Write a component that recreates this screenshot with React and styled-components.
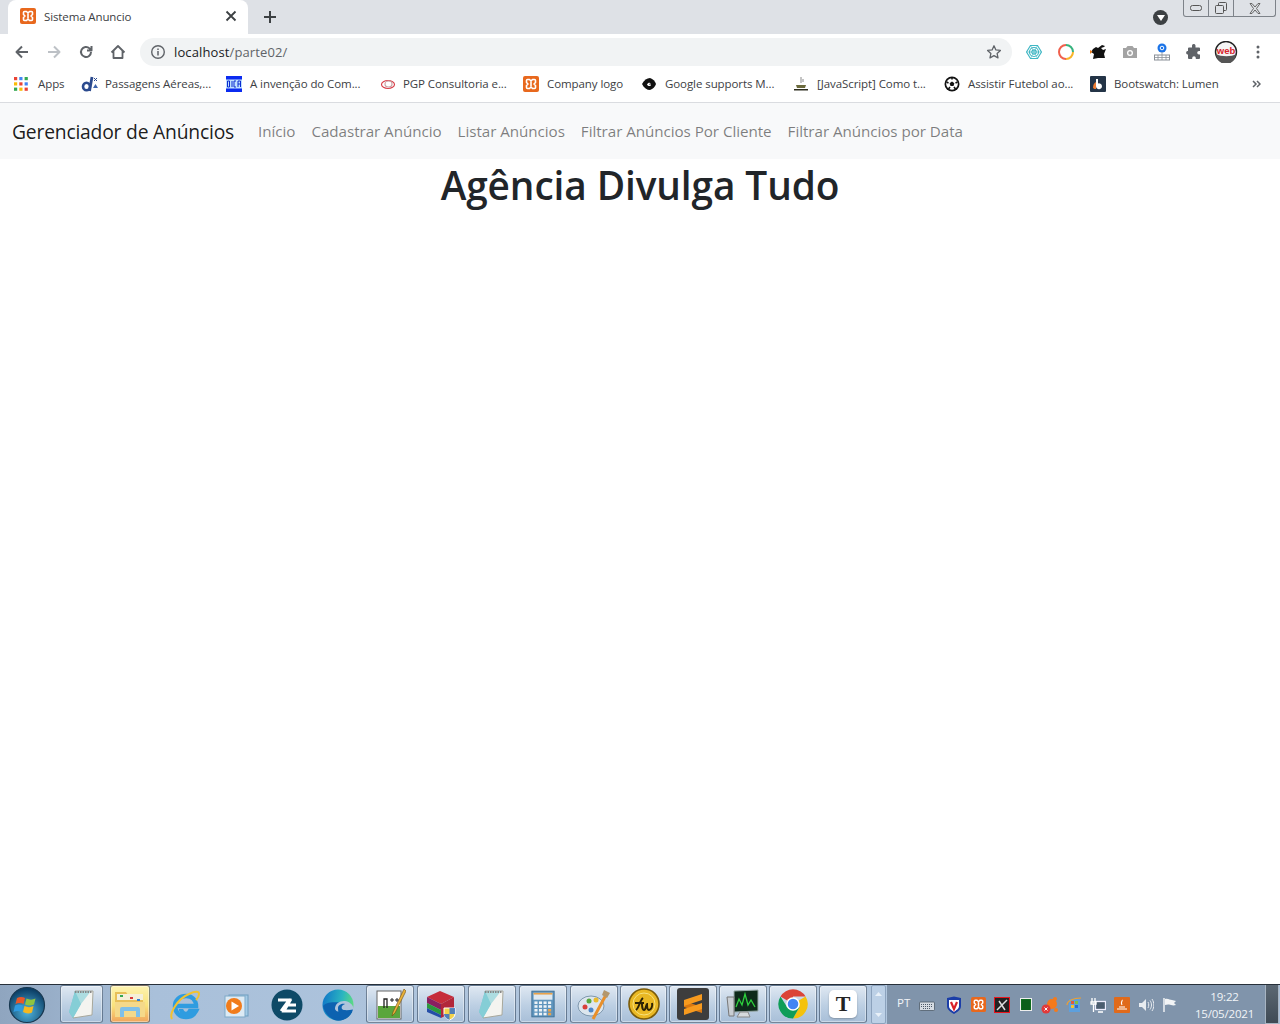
import React from 'react'
import styled, { createGlobalStyle } from 'styled-components'

const UI_FONT = `'Open Sans', 'Noto Sans', sans-serif`

const GlobalStyle = createGlobalStyle`
  * {
    box-sizing: border-box;
  }

  html,
  body {
    margin: 0;
    padding: 0;
    height: 100%;
    background: #ffffff;
    font-family: ${UI_FONT};
    color: #212529;
    overflow: hidden;
  }

  #root {
    height: 100%;
  }
`

const Screen = styled.div`
  width: 1280px;
  height: 1024px;
  display: flex;
  flex-direction: column;
`

/* browser chrome */
const TabStrip = styled.div`
  height: 34px;
  background: #dee1e6;
  display: flex;
  padding-left: 8px;
`

const Tab = styled.div`
  width: 240px;
  height: 34px;
  padding: 0 9px 2px 12px;
  background: #ffffff;
  border-radius: 8px 8px 0 0;
  display: flex;
  align-items: center;
  gap: 8px;
`

const TabTitle = styled.span`
  flex: 1;
  font-size: 11.5px;
  letter-spacing: -0.12px;
  color: #3c4043;
`

const NewTab = styled.div`
  width: 44px;
  height: 34px;
  display: flex;
  align-items: center;
  justify-content: center;
`

const StripRight = styled.div`
  margin-left: auto;
  display: flex;
  align-items: flex-start;
`

const ProfileDot = styled.div`
  width: 15px;
  height: 15px;
  margin: 10px 15px 0 0;
  border-radius: 50%;
  background: #3c4043;
  display: flex;
  align-items: center;
  justify-content: center;
`

const WindowControls = styled.div`
  width: 93px;
  height: 17px;
  margin-right: 4px;
  display: flex;
  border: 1px solid #7d8289;
  border-top: 0;
  border-radius: 0 0 3px 3px;
`

const WindowButton = styled.div`
  flex: ${(p) => p.$grow || 1};
  display: flex;
  align-items: center;
  justify-content: center;
  & + & {
    border-left: 1px solid #7d8289;
  }
`

const Toolbar = styled.div`
  height: 34px;
  padding: 2px 0 0 6px;
  background: #ffffff;
  display: flex;
  align-items: center;
`

const NavIcon = styled.div`
  width: 32px;
  height: 32px;
  display: flex;
  align-items: center;
  justify-content: center;
`

const Omnibox = styled.div`
  width: 872px;
  height: 28px;
  margin-left: 6px;
  padding: 0 10px;
  background: #f1f3f4;
  border-radius: 14px;
  display: flex;
  align-items: center;
  font-size: 13px;
  letter-spacing: 0.12px;
`

const Host = styled.span`
  margin-left: 8px;
  color: #202124;
`

const Path = styled.span`
  flex: 1;
  color: #5f6368;
`

const Extensions = styled.div`
  display: flex;
  align-items: center;
  margin-left: 6px;
`

const ExtIcon = styled.div`
  width: 32px;
  height: 32px;
  display: flex;
  align-items: center;
  justify-content: center;
`

const Bookmarks = styled.div`
  height: 35px;
  padding: 0 0 3px 14px;
  background: #ffffff;
  border-bottom: 1px solid #dadce0;
  display: flex;
  align-items: center;
`

const Bookmark = styled.div`
  flex: 0 0 ${(p) => p.$width}px;
  display: flex;
  align-items: center;
  gap: ${(p) => p.$gap || 8}px;
  font-size: 11.5px;
  letter-spacing: -0.08px;
  color: #3c4043;
  white-space: nowrap;
`

const More = styled.div`
  margin-left: auto;
  margin-right: 19px;
  display: flex;
`

/* the page itself */
const Page = styled.main`
  flex: 1;
  background: #ffffff;
`

const Navbar = styled.nav`
  height: 56px;
  padding: 0 12px;
  background: #f8f9fa;
  display: flex;
  align-items: center;
`

const Brand = styled.a`
  padding-top: 1px;
  margin-right: 24px;
  font-size: 19.3px;
  letter-spacing: -0.2px;
  color: rgba(0, 0, 0, 0.9);
`

const NavLinks = styled.div`
  padding-bottom: 1px;
  display: flex;
  gap: 16px;
`

const NavLink = styled.a`
  font-size: 15.2px;
  letter-spacing: -0.05px;
  color: rgba(0, 0, 0, 0.5);
`

const Title = styled.h1`
  margin: 0;
  font-size: 38.8px;
  font-weight: 600;
  line-height: 52px;
  letter-spacing: -0.1px;
  text-align: center;
  color: #212529;
`

/* windows taskbar */
const Taskbar = styled.footer`
  height: 40px;
  border-top: 1px solid #27303a;
  background: linear-gradient(90deg, #8fa5bf 0%, #a9c0da 12%, #b3c8df 60%, #a9bfd8 100%);
  display: flex;
  align-items: stretch;
`

const Start = styled.div`
  width: 54px;
  display: flex;
  align-items: center;
  justify-content: center;
`

const TaskGroup = styled.div`
  display: flex;
  gap: ${(p) => p.$gap || 0}px;
  margin-left: ${(p) => p.$left || 0}px;
`

const TaskButton = styled.div`
  width: ${(p) => p.$width || 48}px;
  height: 38px;
  display: flex;
  align-items: center;
  justify-content: center;
  border: 1px solid rgba(60, 80, 105, 0.65);
  border-radius: 3px;
  box-shadow: inset 0 0 0 1px rgba(255, 255, 255, 0.4);
  background: ${(p) =>
    p.$active
      ? 'linear-gradient(180deg, #fdf3b0 0%, #f9e27c 55%, #f0a55c 100%)'
      : 'linear-gradient(180deg, #dfe8f2 0%, #bccfe3 55%, #a8bfd8 100%)'};
`

const PinnedIcon = styled.div`
  width: 51px;
  display: flex;
  align-items: center;
  justify-content: center;
`

const ScrollStub = styled.div`
  width: 15px;
  margin-left: 4px;
  padding: 6px 0;
  display: flex;
  flex-direction: column;
  align-items: center;
  justify-content: space-between;
  background: #bcd0e6;
  border: 1px solid #8ba2bd;
  border-radius: 2px;
`

const Tray = styled.div`
  margin-left: 1px;
  padding-left: 10px;
  flex: 1;
  background: #8094ab;
  display: flex;
  align-items: center;
  color: #f2f5f8;
`

const Lang = styled.span`
  width: 20px;
  margin-top: -5px;
  font-size: 11.5px;
`

const TrayIcons = styled.div`
  margin-left: 7px;
  display: flex;
  align-items: center;
  gap: 4px;
`

const TraySlot = styled.div`
  width: 20px;
  height: 20px;
  display: flex;
  align-items: center;
  justify-content: center;
`

const Clock = styled.div`
  width: 71px;
  margin-left: auto;
  margin-right: 5px;
  text-align: center;
  font-size: 11.5px;
  line-height: 17px;
  letter-spacing: -0.2px;
`

const ShowDesktop = styled.div`
  width: 14px;
  margin-right: 1px;
  background: linear-gradient(180deg, #5b6773 0%, #3f4a55 100%);
  border: 1px solid #a7b4c2;
  border-top: 0;
`

const TTile = styled.div`
  width: 28px;
  height: 28px;
  background: #ffffff;
  border-radius: 5px;
  box-shadow: 0 1px 2px rgba(0, 0, 0, 0.25);
  display: flex;
  align-items: center;
  justify-content: center;
  font-family: 'Liberation Serif', serif;
  font-weight: 700;
  font-size: 22px;
  color: #222222;
`

/* icons */
const Xampp = ({ size = 16 }) => (
  <svg width={size} height={size} viewBox="0 0 16 16">
    <rect width="16" height="16" rx="2" fill="#e8681d" />
    <path
      d="M4.500 3.500h2L8 5l1.500-1.500h2a1 1 0 0 1 1 1v2L11 8l1.500 1.500v2a1 1 0 0 1-1 1h-2L8 11l-1.500 1.500h-2a1 1 0 0 1-1-1v-2L5 8 3.500 6.500v-2a1 1 0 0 1 1-1z"
      fill="none"
      stroke="#fff"
      strokeWidth="1.600"
      strokeLinejoin="round"
    />
    <path d="M8 5.500v5" stroke="#fff" strokeWidth="1.600" />
  </svg>
)

const Line = ({ d, color = '#5f6368', w = 2, size = 16 }) => (
  <svg width={size} height={size} viewBox="0 0 16 16" fill="none">
    <path d={d} stroke={color} strokeWidth={w} strokeLinejoin="round" />
  </svg>
)

const AppsGrid = () => {
  const colors = ['#ea4335', '#4285f4', '#34a853', '#fbbc05', '#ea4335', '#4285f4', '#34a853', '#fbbc05', '#ea4335']
  return (
    <svg width="14" height="14" viewBox="0 0 14 14">
      {colors.map((c, i) => (
        <rect key={i} x={(i % 3) * 5.3} y={Math.floor(i / 3) * 5.3} width="3.2" height="3.2" fill={c} />
      ))}
    </svg>
  )
}

const DIcon = () => (
  <svg width="18" height="16" viewBox="0 0 18 16">
    <ellipse cx="5.500" cy="10.500" rx="3.500" ry="3.800" fill="none" stroke="#2b4a8e" strokeWidth="2.600" />
    <path d="M11 1L8.500 15" stroke="#2b4a8e" strokeWidth="2.800" />
    <path d="M13 2l3 3M16 2l-3 3" stroke="#2b4a8e" strokeWidth="1" />
    <path d="M12 12l2.500-4 2.500 4z" fill="#3d64ad" />
  </svg>
)

const DicaIcon = () => (
  <svg width="16" height="16" viewBox="0 0 16 16">
    <rect width="16" height="16" fill="#0b2bf0" />
    <rect y="3.500" width="16" height="9" fill="#bfe0ff" />
    <path d="M1.500 5v6h2V5zM6 5v6M8 5h2M8 5v6h2M12 11V5h2.500v6M12 8h2.500" stroke="#0b2bd0" strokeWidth="1" fill="none" />
  </svg>
)

const PgpIcon = () => (
  <svg width="16" height="16" viewBox="0 0 16 16" fill="none">
    <ellipse cx="8" cy="8.500" rx="6.500" ry="4" stroke="#d8404a" strokeWidth="1.200" />
    <ellipse cx="8.500" cy="8" rx="3.500" ry="3" stroke="#c9a0a4" strokeWidth="1.200" />
  </svg>
)

const GoogleBlob = () => (
  <svg width="16" height="16" viewBox="0 0 16 16">
    <path d="M1 8c2-4 5-6 8-6 3 1 5 3 6 6-1 3-3 5-6 6-3 0-6-2-8-6z" fill="#111" />
    <path d="M6 8.500c1-2 3-2 4-1-1 0-2 0-2 1h2c0 2-3 2-4 0z" fill="#fff" />
  </svg>
)

const CoffeeIcon = () => (
  <svg width="16" height="16" viewBox="0 0 16 16">
    <path d="M8 1v6M10 3v3" stroke="#8a8a8a" strokeWidth="1" />
    <path d="M3 9h10l-1 3H4z" fill="#6b6a3c" />
    <path d="M1 13h14v1.500H1z" fill="#2d2d1e" />
  </svg>
)

const Ball = () => (
  <svg width="16" height="16" viewBox="0 0 16 16">
    <circle cx="8" cy="8" r="7.500" fill="#111" />
    <circle cx="8" cy="8" r="5.800" fill="#fff" />
    <path d="M8 5.500l2.400 1.800-.9 2.800h-3l-.9-2.800z" fill="#111" />
    <path d="M8 1.500v2M2.500 6l2 1M13.500 6l-2 1M4.500 13l1.500-2M11.500 13L10 11" stroke="#111" strokeWidth="1.600" />
  </svg>
)

const BootswatchIcon = () => (
  <svg width="16" height="16" viewBox="0 0 16 16">
    <rect width="16" height="16" rx="1" fill="#243447" />
    <path d="M3 12c0-3 1-5 3-6v7c-1 0-2 0-3-1z" fill="#ef7d32" />
    <path d="M6 3h2v4.500a3 3 0 1 1-2 2.800z" fill="#fff" />
  </svg>
)

const HexWeb = () => (
  <svg width="16" height="16" viewBox="0 0 16 16" fill="none" stroke="#3fb7c4" strokeWidth="1.200">
    <path d="M4.500 1.500h7L15.500 8l-4 6.500h-7L.5 8z" />
    <circle cx="8" cy="8" r="4.500" />
    <circle cx="8" cy="8" r="2.200" />
    <path d="M1 8h14M4.500 1.500l7 13M11.500 1.500l-7 13" strokeWidth="0.600" />
  </svg>
)

const RingIcon = () => (
  <svg width="18" height="18" viewBox="0 0 18 18" fill="none" strokeWidth="2">
    <path d="M9 2a7 7 0 0 1 7 7" stroke="#36b37e" />
    <path d="M16 9a7 7 0 0 1-7 7" stroke="#f9b429" />
    <path d="M9 16a7 7 0 0 1-7-7 7 7 0 0 1 7-7" stroke="#f0604d" />
  </svg>
)

const CatIcon = () => (
  <svg width="17" height="17" viewBox="0 0 17 17">
    <path d="M3 5l3-2 2 1 4-3 3 1-1 1-3 1 2 2 3-1-2 5 1 4H8l-5 1 1-5-3-2z" fill="#111" />
    <path d="M0 6l2.500 1.500L0 10z" fill="#ef7d1a" />
  </svg>
)

const Camera = () => (
  <svg width="16" height="14" viewBox="0 0 16 14">
    <path d="M1 3h3l1.500-2h5L12 3h3v10H1z" fill="#a3a3a3" />
    <circle cx="8" cy="8" r="3" fill="#fff" />
    <circle cx="8" cy="8" r="1.700" fill="#a3a3a3" />
  </svg>
)

const Translate = () => (
  <svg width="18" height="18" viewBox="0 0 18 18">
    <circle cx="9" cy="5" r="4.500" fill="#1a73e8" />
    <circle cx="9" cy="5" r="1.800" fill="none" stroke="#fff" strokeWidth="1" />
    <rect x="1.500" y="12" width="15" height="5" fill="none" stroke="#8a9097" strokeWidth="1" />
    <path d="M1.500 14.500h15M5 12v5M9 9v8M13 12v5" stroke="#8a9097" strokeWidth="0.800" />
  </svg>
)

const Puzzle = () => (
  <svg width="16" height="16" viewBox="0 0 16 16">
    <path
      d="M6 1.500a1.800 1.800 0 0 1 3.500 0V3.500H13a1 1 0 0 1 1 1V7h-1a1.800 1.800 0 0 0 0 3.600h1V14a1 1 0 0 1-1 1H9.800v-1a1.800 1.800 0 0 0-3.600 0v1H3a1 1 0 0 1-1-1v-3.500h-.5a1.800 1.800 0 0 1 0-3.500H2V4.500a1 1 0 0 1 1-1h3z"
      fill="#5f6368"
    />
  </svg>
)

const WebBadge = () => (
  <svg width="24" height="22" viewBox="0 0 24 22">
    <circle cx="12" cy="11" r="10.500" fill="#f4f4f4" stroke="#222" strokeWidth="1.400" />
    <path d="M2 13a10 10 0 0 0 20 0c-4 3-15 3-20 0z" fill="#555" />
    <text x="12" y="13" textAnchor="middle" fontSize="9.500" fontWeight="700" fill="#d8222a" fontFamily="Liberation Sans, sans-serif">
      web
    </text>
  </svg>
)

const Orb = () => (
  <svg width="38" height="38" viewBox="0 0 38 38">
    <defs>
      <radialGradient id="orbFill" cx="50%" cy="70%" r="65%">
        <stop offset="0" stopColor="#4fb4de" />
        <stop offset="1" stopColor="#0c3f66" />
      </radialGradient>
    </defs>
    <circle cx="19" cy="19" r="17.500" fill="url(#orbFill)" stroke="#17374f" strokeWidth="1.200" />
    <path d="M9 12c3-1.500 6-1 8 0l-1.500 6c-2-1-5-1.500-8 0z" fill="#e8582a" />
    <path d="M18.500 12.500c3 1.500 6 1.500 9 0l-1.500 6c-3 1.500-6 1-9 0z" fill="#8fc440" />
    <path d="M7 19.500c3-1.500 5.500-1 8 0L13.500 26c-2.500-1.500-5-1.500-8 0z" fill="#2f9be0" />
    <path d="M16.500 20c3 1.500 6 1.500 9 0L24 26.500c-3 1.500-6 1-9-.500z" fill="#f6b81f" />
  </svg>
)

const Notepad = () => (
  <svg width="30" height="32" viewBox="0 0 30 32">
    <path d="M8 3h18l-1 24-19 3z" fill="#f4f4f0" stroke="#a8a89c" />
    <path d="M8 3L2 24l4 6 8-14z" fill="#6ec2d0" />
    <path d="M8 3h16l-10 13-8 14-4-6z" fill="#8fd3d8" opacity="0.7" />
    <path d="M8 4h17" stroke="#888" strokeWidth="2" strokeDasharray="1.500 1" />
  </svg>
)

const Folder = () => (
  <svg width="32" height="32" viewBox="0 0 32 32">
    <path d="M1 4h11l2 3h15v22H1z" fill="#e8bf58" />
    <rect x="3" y="6" width="26" height="6" fill="#f5efd8" />
    <rect x="6" y="7" width="3" height="2" fill="#36a84f" />
    <rect x="16" y="9" width="3" height="2" fill="#d83a3a" />
    <rect x="23" y="11" width="3" height="2" fill="#2f80d8" />
    <path d="M1 14h30v15H1z" fill="#f4d98a" />
    <path d="M6 29v-8a2 2 0 0 1 2-2h16a2 2 0 0 1 2 2v8h-4v-6H10v6z" fill="#7fc0e8" />
  </svg>
)

const IeIcon = () => (
  <svg width="32" height="32" viewBox="0 0 32 32" fill="none">
    <path d="M7 17h20c0-6-4-10-10-10S6 11 6 17s4 11 11 11c5 0 8-2 10-6h-6c-1 2-2 3-4 3-3 0-5-3-5-5" stroke="#2f9ce0" strokeWidth="4.500" />
    <path d="M3 30C0 25 8 10 20 5c6-3 10-3 10 0 0 2-1 4-3 6" stroke="#f2c230" strokeWidth="2" />
  </svg>
)

const MediaIcon = () => (
  <svg width="26" height="26" viewBox="0 0 26 26">
    <rect x="6" y="3" width="19" height="21" fill="#a4cbe6" stroke="#6e9dbf" />
    <rect x="2" y="4" width="20" height="21" fill="#dceaf4" stroke="#7fa9c8" />
    <circle cx="11" cy="14" r="8" fill="#f17c1b" />
    <path d="M8.500 9.500l7.500 4.500-7.500 4.500z" fill="#fff" />
  </svg>
)

const ZIcon = () => (
  <svg width="32" height="32" viewBox="0 0 32 32">
    <circle cx="16" cy="16" r="15.500" fill="#0e4a67" />
    <path d="M7 11h11L10 22M20 10L13 22h12M17 16h8" stroke="#fff" strokeWidth="2.800" fill="none" />
  </svg>
)

const EdgeIcon = () => (
  <svg width="32" height="32" viewBox="0 0 32 32">
    <defs>
      <linearGradient id="edgeFill" x1="0" y1="0.300" x2="1" y2="0.500">
        <stop offset="0" stopColor="#1078c8" />
        <stop offset="0.600" stopColor="#2bb5c0" />
        <stop offset="1" stopColor="#5fdc80" />
      </linearGradient>
    </defs>
    <circle cx="16" cy="16" r="15.500" fill="url(#edgeFill)" />
    <path d="M1 17c2 8 8 14.500 15 14.500 7 0 13-5 15-11H14c-1-3 1-6 4-7-8-1-15 0-17 3.500z" fill="#0d62b0" />
    <path d="M13 19.500c0-5 5-8 10-7.500 4 .5 8 3.500 8.500 7.500V23H20c-4 0-7-1-7-3.500z" fill="#aec4dc" />
    <path d="M16 19c0-3 4-5 7-4-3 1-4 3-3 5 1 1.500 6 1.500 11 .5-2 7-8 11-14 11-4 0-6-2-7-3 4 1 8 0 9-2-2 0-3-4-3-7.500z" fill="#0d62b0" />
  </svg>
)

const NotepadPlus = () => (
  <svg width="32" height="34" viewBox="0 0 32 34">
    <rect x="3" y="4" width="24" height="28" fill="#fff" stroke="#666" />
    <rect x="4" y="19" width="22" height="12" fill="#5aa63c" />
    <path d="M10 21v-9h3v9" fill="none" stroke="#222" strokeWidth="1.300" />
    <path d="M16 13h4M18 11v4M21 13h4M23 11v4" stroke="#222" strokeWidth="1" />
    <path d="M30 2L19 25l-1 4 3-3L32 4z" fill="#e8b23a" stroke="#6e4a10" strokeWidth="0.600" />
  </svg>
)

const WinRar = () => (
  <svg width="34" height="34" viewBox="0 0 34 34">
    <path d="M3 10l13-6 14 6-13 7z" fill="#c62c3a" />
    <path d="M3 10l14 7v6L3 16z" fill="#8a1f60" />
    <path d="M3 16l14 7v5L3 21z" fill="#2c9a3c" />
    <path d="M3 21l14 7v3L3 25z" fill="#254fa8" />
    <path d="M17 17l13-7v14l-13 7z" fill="#b2263a" />
    <path d="M20 21h11v6c0 3-3 5-5.500 6-2.500-1-5.500-3-5.500-6z" fill="#f3d34a" stroke="#fff" />
    <path d="M25.500 21v12c-2.500-1-5.500-3-5.500-6h11v-6z" fill="#2a6bcf" opacity="0.8" />
  </svg>
)

const Calculator = () => (
  <svg width="24" height="30" viewBox="0 0 28 32">
    <rect x="1" y="1" width="26" height="30" fill="#5f95bd" stroke="#3a6b92" />
    <rect x="3" y="3" width="22" height="8" fill="#dfe9f1" />
    <rect x="3" y="3" width="22" height="2" fill="#e8a24c" />
    {[0, 1, 2, 3].map((r) =>
      [0, 1, 2, 3].map((c) => <rect key={`${r}-${c}`} x={4 + c * 5.300} y={13 + r * 4.400} width="3.600" height="3" fill={c === 3 && r > 1 ? '#e8a24c' : '#eef3f7'} />)
    )}
  </svg>
)

const Paint = () => (
  <svg width="34" height="34" viewBox="0 0 34 34">
    <ellipse cx="14" cy="19" rx="13" ry="10" fill="#dce6ee" stroke="#7f98ae" />
    <circle cx="8" cy="20" r="2.500" fill="#d8403a" />
    <circle cx="12" cy="14" r="2.500" fill="#58a83e" />
    <circle cx="19" cy="13" r="2.500" fill="#e9bb2f" />
    <circle cx="14" cy="23" r="2.500" fill="#4c86c8" />
    <path d="M30 6L16 32" stroke="#e88f2a" strokeWidth="3" />
    <path d="M27 3l6 3-3 5-5-3z" fill="#b3966c" />
  </svg>
)

const FwIcon = () => (
  <svg width="32" height="32" viewBox="0 0 32 32">
    <circle cx="16" cy="16" r="15" fill="#e9b824" stroke="#7a5b0a" strokeWidth="1.600" />
    <circle cx="16" cy="16" r="11" fill="none" stroke="#f8e27c" strokeWidth="1" />
    <path d="M8 22c3-2 4-10 7-12M7 15h9M14 16c0 4 1 6 2 6 2 0 2-6 3-6 0 5 1 6 2 6 2 0 4-4 3-7" stroke="#2d2305" strokeWidth="2" fill="none" />
  </svg>
)

const Sublime = () => (
  <svg width="32" height="32" viewBox="0 0 32 32">
    <rect width="32" height="32" rx="3" fill="#3d3d3d" />
    <path d="M7 13l18 6v6L7 19z" fill="#d97710" />
    <path d="M7 12l18-6v6L7 18z" fill="#f79a1e" />
    <path d="M7 21l18-6v6L7 27z" fill="#f79a1e" />
  </svg>
)

const TaskManager = () => (
  <svg width="34" height="32" viewBox="0 0 34 32">
    <path d="M8 3l24-1v21l-24 1z" fill="#0e2a1a" stroke="#9aa" />
    <path d="M10 19l3-8 3 6 3-11 3 11 3-5 4 7" stroke="#2dd13d" strokeWidth="1.300" fill="none" />
    <path d="M1 9h7v19H3z" fill="#c9ced3" stroke="#777" />
    <path d="M14 24h8l2 5H11z" fill="#d6dadd" stroke="#888" />
  </svg>
)

const ChromeLogo = () => (
  <svg width="30" height="30" viewBox="0 0 30 30">
    <path d="M15 15L2.500 7.500A14.500 14.500 0 0 1 27.600 7.500H15z" fill="#db4437" />
    <path d="M15 15l12.600-7.500A14.500 14.500 0 0 1 15 29.500L21.500 18z" fill="#f4c20d" />
    <path d="M15 15l6.500 3L15 29.500A14.500 14.500 0 0 1 2.500 7.500L9 18z" fill="#0f9d58" />
    <circle cx="15" cy="15" r="6.800" fill="#fff" />
    <circle cx="15" cy="15" r="5.300" fill="#4285f4" />
  </svg>
)

const Keyboard = () => (
  <svg width="16" height="12" viewBox="0 0 16 12">
    <rect x="0.500" y="3" width="15" height="8.500" rx="1" fill="#d6dce3" stroke="#4d5a68" strokeWidth="0.800" />
    <path d="M2 5.500h12M2 7.500h12M4 9.500h8" stroke="#4d5a68" strokeDasharray="1 1" />
  </svg>
)

const ShieldTray = () => (
  <svg width="16" height="18" viewBox="0 0 16 18">
    <path d="M1 2l7-1.500L15 2v8c0 4-4 6-7 8-3-2-7-4-7-8z" fill="#1b3ea8" />
    <path d="M3 4h10v6c0 3-3 4-5 6-2-2-5-3-5-6z" fill="#fff" />
    <path d="M5 6l3 7 3-7" stroke="#d8222a" strokeWidth="2.200" fill="none" />
  </svg>
)

const RedSquare = () => (
  <svg width="16" height="16" viewBox="0 0 16 16">
    <rect x="0.500" y="0.500" width="15" height="15" fill="#222" stroke="#e8141c" />
    <path d="M3 13L13 3M5 4l6 9" stroke="#ddd" strokeWidth="1.500" />
  </svg>
)

const GreenGrid = () => (
  <svg width="12" height="13" viewBox="0 0 12 13">
    <rect x="0.500" y="0.500" width="11" height="12" fill="#0e6b1e" stroke="#eee" />
    <path d="M2 3h8M2 5h8M2 7h8M2 9h8M2 11h8" stroke="#063f10" strokeWidth="0.600" />
  </svg>
)

const AvastTray = () => (
  <svg width="18" height="18" viewBox="0 0 18 18">
    <circle cx="11" cy="8" r="5" fill="#f47a1c" />
    <circle cx="14" cy="3" r="2" fill="#f47a1c" />
    <circle cx="15" cy="14" r="2" fill="#f47a1c" />
    <circle cx="5" cy="13" r="4.500" fill="#e23a3a" />
    <path d="M3.500 11.500l3 3M6.500 11.500l-3 3" stroke="#fff" strokeWidth="1" />
  </svg>
)

const UpdateTray = () => (
  <svg width="16" height="16" viewBox="0 0 16 16">
    <rect x="3" y="2" width="11" height="13" fill="#5da0dd" />
    <rect x="5" y="4" width="3" height="3" fill="#e05a3a" />
    <rect x="9" y="4" width="3" height="3" fill="#7cc04a" />
    <rect x="5" y="8" width="3" height="3" fill="#f2c230" />
    <rect x="9" y="8" width="3" height="3" fill="#2f70c8" />
    <path d="M1 8c0-4 6-7 14-7" stroke="#f0a030" strokeWidth="1.200" fill="none" />
  </svg>
)

const NetworkTray = () => (
  <svg width="16" height="16" viewBox="0 0 16 16" fill="none" stroke="#fff" strokeWidth="1.300">
    <rect x="5.500" y="4.500" width="10" height="8" stroke="#eef" fill="#4b5d70" />
    <path d="M2 1v4M5 1v4M1 5h5v2H1zM3.500 7v8M8 15h5" />
  </svg>
)

const JavaTray = () => (
  <svg width="16" height="16" viewBox="0 0 16 16">
    <rect width="16" height="16" rx="1" fill="#e06a1b" />
    <path d="M3 12h10M5 10h6M8 3c1 1-2 2 0 5" stroke="#fff" strokeWidth="1.200" fill="none" />
  </svg>
)

const Speaker = () => (
  <svg width="16" height="16" viewBox="0 0 16 16" fill="none">
    <path d="M1 6h3l4-4v12l-4-4H1z" fill="#e8ecf0" />
    <path d="M10 5c1 2 1 4 0 6M12 3.500c2 3 2 6 0 9M14 2c2.500 4 2.500 8 0 12" stroke="#e8ecf0" />
  </svg>
)

const FlagTray = () => (
  <svg width="16" height="16" viewBox="0 0 16 16">
    <path d="M2 1v14" stroke="#fff" strokeWidth="1.300" />
    <path d="M3 2c3-1 5 1 7 1l4 1-2 2 2 2c-3 1-5 0-7-.5-1-.2-3 0-4 .5z" fill="#f2f4f6" />
  </svg>
)

const bookmarks = [
  { width: 67, icon: <AppsGrid />, label: 'Apps', gap: 10 },
  { width: 145, icon: <DIcon />, label: 'Passagens Aéreas,...', gap: 6 },
  { width: 154, icon: <DicaIcon />, label: 'A invenção do Com...' },
  { width: 143, icon: <PgpIcon />, label: 'PGP Consultoria e...', gap: 7 },
  { width: 118, icon: <Xampp />, label: 'Company logo' },
  { width: 152, icon: <GoogleBlob />, label: 'Google supports M...' },
  { width: 151, icon: <CoffeeIcon />, label: '[JavaScript] Como t...' },
  { width: 146, icon: <Ball />, label: 'Assistir Futebol ao...' },
  { width: 140, icon: <BootswatchIcon />, label: 'Bootswatch: Lumen' },
]

const navItems = ['Início', 'Cadastrar Anúncio', 'Listar Anúncios', 'Filtrar Anúncios Por Cliente', 'Filtrar Anúncios por Data']

const App = () => (
  <Screen>
    <GlobalStyle />
    <TabStrip>
      <Tab>
        <Xampp />
        <TabTitle>Sistema Anuncio</TabTitle>
        <Line d="M3.500 3.500l9 9M12.500 3.500l-9 9" color="#3c4043" w={1.800} />
      </Tab>
      <NewTab>
        <Line d="M8 2v12M2 8h12" color="#3c4043" w={2} />
      </NewTab>
      <StripRight>
        <ProfileDot>
          <svg width="8" height="6" viewBox="0 0 8 6">
            <path d="M0 0h8L4 6z" fill="#fff" />
          </svg>
        </ProfileDot>
        <WindowControls>
          <WindowButton $grow={25}>
            <svg width="12" height="6" viewBox="0 0 12 6">
              <rect x="0.500" y="0.500" width="11" height="5" rx="2" fill="none" stroke="#555" />
            </svg>
          </WindowButton>
          <WindowButton $grow={25}>
            <svg width="12" height="12" viewBox="0 0 12 12" fill="none" stroke="#555">
              <rect x="3.500" y="0.500" width="8" height="8" rx="1" />
              <rect x="0.500" y="3.500" width="8" height="8" rx="1" fill="#dee1e6" />
            </svg>
          </WindowButton>
          <WindowButton $grow={42}>
            <svg width="12" height="11" viewBox="0 0 12 11" fill="none" stroke="#666">
              <path d="M1 .5h2L6 4l3-3.500h2L7.500 5.500 11 10.500H9L6 7l-3 3.500H1L4.500 5.500z" />
            </svg>
          </WindowButton>
        </WindowControls>
      </StripRight>
    </TabStrip>

    <Toolbar>
      <NavIcon>
        <Line d="M14 8H3M8 2.500L2.500 8 8 13.500" />
      </NavIcon>
      <NavIcon>
        <Line d="M2 8h11M8 2.500L13.500 8 8 13.500" color="#bdc1c6" />
      </NavIcon>
      <NavIcon>
        <Line d="M13 8a5 5 0 1 1-1.500-3.600L13 6M13.500 2v4.500H9" />
      </NavIcon>
      <NavIcon>
        <Line d="M1.500 8.500L8 2l6.500 6.500M3.500 7v7h9V7" w={1.800} />
      </NavIcon>
      <Omnibox>
        <svg width="16" height="16" viewBox="0 0 16 16" fill="none">
          <circle cx="8" cy="8" r="6.300" stroke="#5f6368" strokeWidth="1.400" />
          <path d="M8 7v4.500M8 4.500v1.500" stroke="#5f6368" strokeWidth="1.500" />
        </svg>
        <Host>localhost</Host>
        <Path>/parte02/</Path>
        <Line d="M8 1.800l1.900 4.100 4.500.5-3.300 3 .9 4.500L8 11.600l-4 2.300.9-4.500-3.300-3 4.500-.5z" w={1.300} />
      </Omnibox>
      <Extensions>
        <ExtIcon><HexWeb /></ExtIcon>
        <ExtIcon><RingIcon /></ExtIcon>
        <ExtIcon><CatIcon /></ExtIcon>
        <ExtIcon><Camera /></ExtIcon>
        <ExtIcon><Translate /></ExtIcon>
        <ExtIcon><Puzzle /></ExtIcon>
        <ExtIcon><WebBadge /></ExtIcon>
        <ExtIcon>
          <svg width="4" height="14" viewBox="0 0 4 14">
            <circle cx="2" cy="2" r="1.500" fill="#5f6368" />
            <circle cx="2" cy="7" r="1.500" fill="#5f6368" />
            <circle cx="2" cy="12" r="1.500" fill="#5f6368" />
          </svg>
        </ExtIcon>
      </Extensions>
    </Toolbar>

    <Bookmarks>
      {bookmarks.map((b) => (
        <Bookmark key={b.label} $width={b.width} $gap={b.gap}>
          {b.icon}
          {b.label}
        </Bookmark>
      ))}
      <More>
        <svg width="9" height="8" viewBox="0 0 9 8" fill="none" stroke="#5f6368" strokeWidth="1.500">
          <path d="M1 1l3 3-3 3M5 1l3 3-3 3" />
        </svg>
      </More>
    </Bookmarks>

    <Page>
      <Navbar>
        <Brand>Gerenciador de Anúncios</Brand>
        <NavLinks>
          {navItems.map((item) => (
            <NavLink key={item}>{item}</NavLink>
          ))}
        </NavLinks>
      </Navbar>
      <Title>Agência Divulga Tudo</Title>
    </Page>

    <Taskbar>
      <Start><Orb /></Start>
      <TaskGroup $left={6} $gap={7}>
        <TaskButton $width={43}><Notepad /></TaskButton>
        <TaskButton $width={40} $active><Folder /></TaskButton>
      </TaskGroup>
      <TaskGroup $left={9}>
        <PinnedIcon><IeIcon /></PinnedIcon>
        <PinnedIcon><MediaIcon /></PinnedIcon>
        <PinnedIcon><ZIcon /></PinnedIcon>
        <PinnedIcon><EdgeIcon /></PinnedIcon>
      </TaskGroup>
      <TaskGroup $left={3} $gap={3}>
        <TaskButton><NotepadPlus /></TaskButton>
        <TaskButton><WinRar /></TaskButton>
        <TaskButton><Notepad /></TaskButton>
        <TaskButton><Calculator /></TaskButton>
        <TaskButton><Paint /></TaskButton>
      </TaskGroup>
      <TaskGroup $left={2} $gap={2}>
        <TaskButton $width={47}><FwIcon /></TaskButton>
        <TaskButton><Sublime /></TaskButton>
        <TaskButton><TaskManager /></TaskButton>
        <TaskButton><ChromeLogo /></TaskButton>
        <TaskButton><TTile>T</TTile></TaskButton>
      </TaskGroup>
      <ScrollStub>
        <svg width="7" height="4" viewBox="0 0 7 4"><path d="M3.500 0L7 4H0z" fill="#e8f0f8" /></svg>
        <svg width="7" height="4" viewBox="0 0 7 4"><path d="M0 0h7L3.500 4z" fill="#e8f0f8" /></svg>
      </ScrollStub>
      <Tray>
        <Lang>PT</Lang>
        <TraySlot><Keyboard /></TraySlot>
        <TrayIcons>
          <TraySlot><ShieldTray /></TraySlot>
          <TraySlot><Xampp size={15} /></TraySlot>
          <TraySlot><RedSquare /></TraySlot>
          <TraySlot><GreenGrid /></TraySlot>
          <TraySlot><AvastTray /></TraySlot>
          <TraySlot><UpdateTray /></TraySlot>
          <TraySlot><NetworkTray /></TraySlot>
          <TraySlot><JavaTray /></TraySlot>
          <TraySlot><Speaker /></TraySlot>
          <TraySlot><FlagTray /></TraySlot>
        </TrayIcons>
        <Clock>
          19:22
          <br />
          15/05/2021
        </Clock>
      </Tray>
      <ShowDesktop />
    </Taskbar>
  </Screen>
)

export default App
